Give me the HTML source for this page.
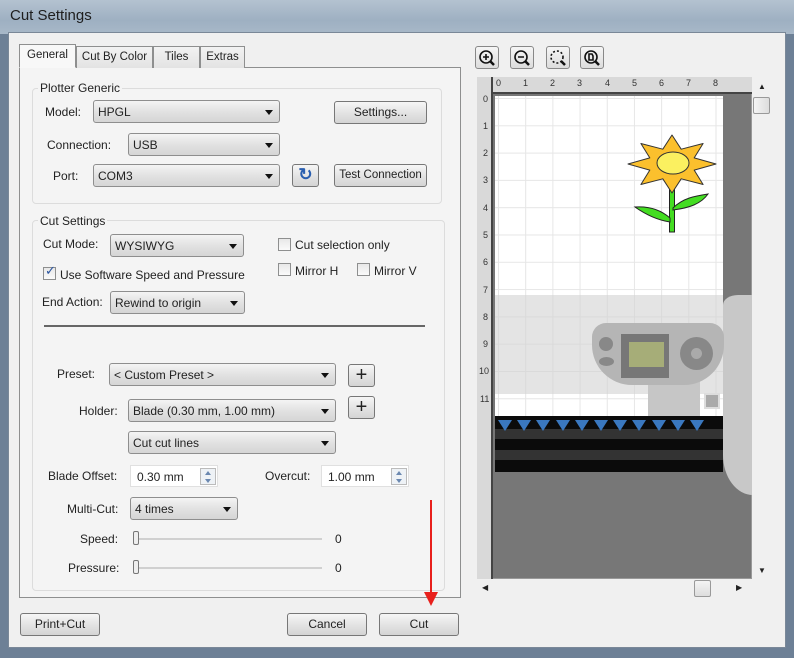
<!DOCTYPE html>
<html><head><meta charset="utf-8"><style>
*{box-sizing:border-box;margin:0;padding:0}
body{width:794px;height:658px;overflow:hidden;font-family:"Liberation Sans",sans-serif;font-size:12px;color:#222;background:#6d8096;position:relative}
.a{position:absolute}
.title{left:0;top:0;width:794px;height:34px;background:linear-gradient(#b4c2d0,#9eb0c2 60%,#a8b8c8);}
.client{left:8px;top:32px;width:778px;height:616px;background:#f0f0f0;border:1px solid #7a8898}
.combo{position:absolute;height:23px;border:1px solid #8e8e8e;border-radius:3px;background:linear-gradient(#f4f4f4,#e2e2e2 50%,#d5d5d5);padding:4px 4px;font-size:12px;white-space:nowrap}
.combo:after{content:"";position:absolute;right:6px;top:9px;border:4px solid transparent;border-top:5px solid #111;border-bottom:0}
.btn{position:absolute;height:23px;border:1px solid #777;border-radius:3px;background:linear-gradient(#f6f6f6,#e4e4e4 50%,#d4d4d4);text-align:center;line-height:21px;font-size:12px}
.lbl{position:absolute;font-size:12px;white-space:nowrap}
.grp{position:absolute;border:1px solid #dcdcdc;border-radius:4px}
.cb{position:absolute;width:13px;height:13px;border:1px solid #8e8f8f;background:linear-gradient(#e8e8e8,#fafafa)}
.edit{position:absolute;height:22px;background:#fff;border:1px solid #e0e0e0;padding:4px 6px;font-size:12px}
.spin{position:absolute;right:1px;top:2px;width:16px;height:17px;border:1px solid #bbb;background:#eef2f6}
.spin:before{content:"";position:absolute;left:4px;top:2px;border:3px solid transparent;border-bottom:4px solid #6b88b0;border-top:0}
.spin:after{content:"";position:absolute;left:4px;top:10px;border:3px solid transparent;border-top:4px solid #6b88b0;border-bottom:0}
.tab{position:absolute;top:46px;height:22px;border:1px solid #8e8f8f;border-bottom:none;background:linear-gradient(#f2f2f2,#e3e3e3);padding:4px 0;font-size:11.5px;text-align:center;white-space:nowrap;overflow:hidden}
.rt{position:absolute;font-size:9px;color:#333}
.tri{position:absolute;top:420px;border:7px solid transparent;border-top:11px solid #3a78c0;border-bottom:0}
.zb{position:absolute;top:46px;width:24px;height:23px;border:1px solid #888;border-radius:3px;background:linear-gradient(#f6f6f6,#dcdcdc)}
</style></head><body>
<div class="a title"></div>
<div class="a" style="left:10px;top:7px;font-size:15px;color:#1e1e1e">Cut Settings</div>
<div class="a client"></div>

<!-- tab panel -->
<div class="a" style="left:19px;top:67px;width:442px;height:531px;border:1px solid #8e8f8f;background:#f4f4f4"></div>
<div class="tab" style="left:19px;top:44px;width:57px;height:24px;background:#f8f8f8;border-bottom:1px solid #f8f8f8;z-index:2">General</div>
<div class="tab" style="left:76px;width:77px">Cut By Color</div>
<div class="tab" style="left:153px;width:47px">Tiles</div>
<div class="tab" style="left:200px;width:45px">Extras</div>

<div class="grp" style="left:32px;top:88px;width:410px;height:116px"></div>
<div class="lbl" style="left:38px;top:81px;background:#f4f4f4;padding:0 2px">Plotter Generic</div>
<div class="lbl" style="left:45px;top:105px">Model:</div>
<div class="combo" style="left:93px;top:100px;width:187px">HPGL</div>
<div class="btn" style="left:334px;top:101px;width:93px">Settings...</div>
<div class="lbl" style="left:47px;top:138px">Connection:</div>
<div class="combo" style="left:128px;top:133px;width:152px">USB</div>
<div class="lbl" style="left:53px;top:169px">Port:</div>
<div class="combo" style="left:93px;top:164px;width:187px">COM3</div>
<div class="btn" style="left:292px;top:164px;width:27px;height:23px;font-size:17px;color:#2a5fb0;font-weight:bold;line-height:20px">&#8635;</div>
<div class="btn" style="left:334px;top:164px;width:93px;font-size:11.5px">Test Connection</div>

<div class="grp" style="left:32px;top:220px;width:413px;height:371px"></div>
<div class="lbl" style="left:38px;top:214px;background:#f4f4f4;padding:0 2px">Cut Settings</div>
<div class="lbl" style="left:43px;top:237px">Cut Mode:</div>
<div class="combo" style="left:110px;top:234px;width:134px">WYSIWYG</div>
<div class="cb" style="left:278px;top:238px"></div><div class="lbl" style="left:295px;top:238px">Cut selection only</div>
<div class="cb" style="left:43px;top:267px"></div><div class="lbl" style="left:45px;top:263px;color:#2a55a0;font-size:13px">&#10003;</div>
<div class="lbl" style="left:60px;top:268px">Use Software Speed and Pressure</div>
<div class="cb" style="left:278px;top:263px"></div><div class="lbl" style="left:295px;top:264px">Mirror H</div>
<div class="cb" style="left:357px;top:263px"></div><div class="lbl" style="left:374px;top:264px">Mirror V</div>
<div class="lbl" style="left:42px;top:295px">End Action:</div>
<div class="combo" style="left:110px;top:291px;width:135px">Rewind to origin</div>
<div class="a" style="left:44px;top:325px;width:381px;height:2px;background:#666"></div>

<div class="lbl" style="left:57px;top:367px">Preset:</div>
<div class="combo" style="left:109px;top:363px;width:227px">&lt; Custom Preset &gt;</div>
<div class="btn" style="left:348px;top:364px;width:27px;font-size:20px;line-height:20px">+</div>
<div class="lbl" style="left:79px;top:404px">Holder:</div>
<div class="combo" style="left:128px;top:399px;width:208px">Blade (0.30 mm, 1.00 mm)</div>
<div class="btn" style="left:348px;top:396px;width:27px;font-size:20px;line-height:20px">+</div>
<div class="combo" style="left:128px;top:431px;width:208px">Cut cut lines</div>
<div class="lbl" style="left:48px;top:469px">Blade Offset:</div>
<div class="edit" style="left:130px;top:465px;width:88px">0.30 mm<div class="spin"></div></div>
<div class="lbl" style="left:265px;top:469px">Overcut:</div>
<div class="edit" style="left:321px;top:465px;width:88px">1.00 mm<div class="spin"></div></div>
<div class="lbl" style="left:67px;top:502px">Multi-Cut:</div>
<div class="combo" style="left:130px;top:497px;width:108px">4 times</div>
<div class="lbl" style="left:80px;top:532px">Speed:</div>
<div class="a" style="left:136px;top:538px;width:186px;height:2px;background:#d0d0d0"></div>
<div class="a" style="left:133px;top:531px;width:6px;height:14px;border:1px solid #777;border-radius:2px;background:#eee"></div>
<div class="lbl" style="left:335px;top:532px">0</div>
<div class="lbl" style="left:68px;top:561px">Pressure:</div>
<div class="a" style="left:136px;top:567px;width:186px;height:2px;background:#d0d0d0"></div>
<div class="a" style="left:133px;top:560px;width:6px;height:14px;border:1px solid #777;border-radius:2px;background:#eee"></div>
<div class="lbl" style="left:335px;top:561px">0</div>

<div class="btn" style="left:20px;top:613px;width:80px">Print+Cut</div>
<div class="btn" style="left:287px;top:613px;width:80px">Cancel</div>
<div class="btn" style="left:379px;top:613px;width:80px">Cut</div>
<div class="a" style="left:430px;top:500px;width:2px;height:92px;background:#e8201c"></div>
<div class="a" style="left:424px;top:592px;border:7px solid transparent;border-top:14px solid #e8201c;border-bottom:0"></div>

<!-- zoom buttons -->
<div class="zb" style="left:475px"></div><div class="zb" style="left:510px"></div><div class="zb" style="left:546px"></div><div class="zb" style="left:580px"></div>
<svg class="a" style="left:475px;top:46px" width="140" height="24">
<g fill="none" stroke="#111" stroke-width="1.6"><circle cx="11" cy="11" r="6"/><circle cx="46" cy="11" r="6"/><circle cx="82" cy="11" r="6" stroke-dasharray="2 2"/><circle cx="116" cy="11" r="6"/>
<path d="M8 11h6M11 8v6M43 11h6M114 8h3l1 2v4h-4z"/><path stroke-width="2.5" d="M15 15l4 4M50 15l4 4M86 15l4 4M120 15l4 4"/></g></svg>

<!-- canvas -->
<div class="a" style="left:477px;top:77px;width:275px;height:502px;background:#777;border:1px solid #999"></div>
<div class="a" style="left:477px;top:77px;width:275px;height:17px;background:#d9d9d9;border-bottom:2px solid #444"></div>
<div class="a" style="left:477px;top:77px;width:16px;height:502px;background:#d9d9d9;border-right:2px solid #444"></div>
<div class="a" style="left:495px;top:96px;width:228px;height:320px;background:#fff;background-image:linear-gradient(90deg,#e6e6e6 1px,transparent 1px),linear-gradient(#e6e6e6 1px,transparent 1px);background-size:27.2px 27.3px;background-position:3px 2px"></div>
<div class="rt" style="left:496px;top:78px">0</div><div class="rt" style="left:523px;top:78px">1</div><div class="rt" style="left:550px;top:78px">2</div><div class="rt" style="left:577px;top:78px">3</div><div class="rt" style="left:605px;top:78px">4</div><div class="rt" style="left:632px;top:78px">5</div><div class="rt" style="left:659px;top:78px">6</div><div class="rt" style="left:686px;top:78px">7</div><div class="rt" style="left:713px;top:78px">8</div>
<div class="rt" style="left:483px;top:94px">0</div><div class="rt" style="left:483px;top:121px">1</div><div class="rt" style="left:483px;top:148px">2</div><div class="rt" style="left:483px;top:175px">3</div><div class="rt" style="left:483px;top:203px">4</div><div class="rt" style="left:483px;top:230px">5</div><div class="rt" style="left:483px;top:257px">6</div><div class="rt" style="left:483px;top:285px">7</div><div class="rt" style="left:483px;top:312px">8</div><div class="rt" style="left:483px;top:339px">9</div><div class="rt" style="left:479px;top:366px">10</div><div class="rt" style="left:480px;top:394px">11</div>

<!-- printer overlay -->
<div class="a" style="left:495px;top:295px;width:228px;height:99px;background:rgba(210,210,210,.6)"></div>
<div class="a" style="left:723px;top:295px;width:30px;height:200px;background:#c8c8c8;border-radius:30px 0 0 60px / 20px 0 0 80px"></div>
<div class="a" style="left:648px;top:380px;width:52px;height:36px;background:#c6c6c6"></div>
<div class="a" style="left:592px;top:323px;width:132px;height:62px;background:#b5b5b5;border-radius:14px 14px 40px 40px"></div>
<div class="a" style="left:621px;top:334px;width:48px;height:44px;background:#777"></div>
<div class="a" style="left:629px;top:342px;width:35px;height:25px;background:#a6ad78"></div>
<div class="a" style="left:599px;top:337px;width:14px;height:14px;border-radius:50%;background:#888"></div>
<div class="a" style="left:599px;top:357px;width:15px;height:9px;border-radius:50%;background:#888"></div>
<div class="a" style="left:680px;top:337px;width:33px;height:33px;border-radius:50%;background:#888"></div>
<div class="a" style="left:691px;top:348px;width:11px;height:11px;border-radius:50%;background:#aaa"></div>
<div class="a" style="left:704px;top:393px;width:16px;height:16px;background:#aaa;border:2px solid #ddd"></div>
<div class="a" style="left:495px;top:416px;width:228px;height:56px;background:linear-gradient(#0b0b0b 0 13px,#333 13px 23px,#0b0b0b 23px 34px,#333 34px 44px,#0b0b0b 44px)"></div>
<div class="tri" style="left:498px"></div><div class="tri" style="left:517px"></div><div class="tri" style="left:536px"></div><div class="tri" style="left:556px"></div><div class="tri" style="left:575px"></div><div class="tri" style="left:594px"></div><div class="tri" style="left:613px"></div><div class="tri" style="left:632px"></div><div class="tri" style="left:652px"></div><div class="tri" style="left:671px"></div><div class="tri" style="left:690px"></div>

<!-- flower -->
<svg class="a" style="left:625px;top:134px" width="95" height="100">
<rect x="44.5" y="55" width="5" height="43" fill="#44dd22" stroke="#222" stroke-width="1"/>
<path d="M48 74C58 64 70 62 83 60C76 70 64 74 48 76z" fill="#44dd22" stroke="#222"/>
<path d="M45 88C32 86 20 80 10 73C24 72 36 76 45 84z" fill="#44dd22" stroke="#222"/>
<path d="M91 30L69.2 36.1L78.1 50.5L56.2 44.8L47 59L37.8 44.8L15.9 50.5L24.8 36.1L3 30L24.8 23.9L15.9 9.5L37.8 15.2L47 1L56.2 15.2L78.1 9.5L69.2 23.9z" fill="#fbc02d" stroke="#333" stroke-linejoin="round"/>
<ellipse cx="48" cy="29" rx="16" ry="11" fill="#fbf060" stroke="#333"/>
</svg>

<!-- scrollbars -->
<div class="a" style="left:752px;top:77px;width:18px;height:502px;background:#f0f0f0"></div>
<div class="a" style="left:753px;top:97px;width:17px;height:17px;border:1px solid #999;border-radius:2px;background:linear-gradient(90deg,#f4f4f4,#ddd)"></div>
<div class="lbl" style="left:758px;top:82px;font-size:8px">&#9650;</div>
<div class="lbl" style="left:758px;top:566px;font-size:8px">&#9660;</div>
<div class="a" style="left:477px;top:579px;width:275px;height:18px;background:#f0f0f0"></div>
<div class="a" style="left:694px;top:580px;width:17px;height:17px;border:1px solid #999;border-radius:2px;background:linear-gradient(#f4f4f4,#ddd)"></div>
<div class="lbl" style="left:482px;top:583px;font-size:8px">&#9664;</div>
<div class="lbl" style="left:736px;top:583px;font-size:8px">&#9654;</div>
</body></html>
